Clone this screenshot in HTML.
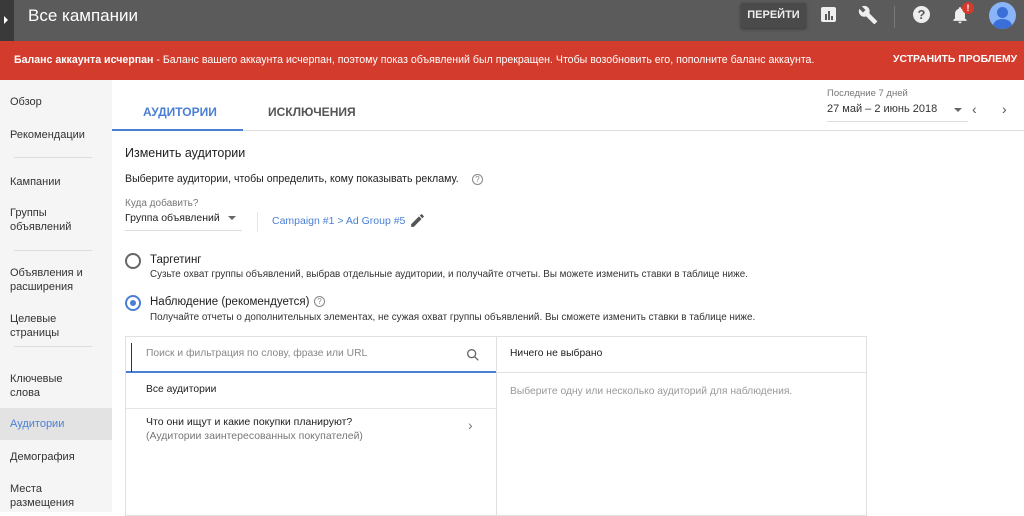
<!DOCTYPE html><html><head><meta charset="utf-8"><style>
*{margin:0;padding:0;box-sizing:border-box}
body{width:1024px;height:512px;overflow:hidden;font-family:"Liberation Sans",sans-serif;background:#fff;position:relative;color:#212121}
.a{position:absolute;white-space:nowrap}
.top{position:absolute;left:0;top:0;width:1024px;height:41px;background:#5b5b5b}
.red{position:absolute;left:0;top:41px;width:1024px;height:39px;background:#d33b2c;color:#fff;font-size:10.6px}
.side{position:absolute;left:0;top:80px;width:112px;height:432px;background:#f5f5f5;font-size:11px;color:#333}
.side .a{left:10px;line-height:14px}
.sep{position:absolute;left:14px;width:78px;height:1px;background:#ddd}
</style></head><body>
<div class="top">
<div class="a" style="left:0;top:0;width:14px;height:41px;background:#3a3a3a"></div>
<div class="a" style="left:4px;top:16px;width:0;height:0;border-left:4px solid #fff;border-top:4px solid transparent;border-bottom:4px solid transparent"></div>
<div class="a" style="left:28px;top:6px;font-size:17px;color:#fff">Все кампании</div>
<div class="a" style="left:741px;top:3px;width:65px;height:25px;background:#4a4a4a;box-shadow:0 1px 3px rgba(0,0,0,.4);color:#eee;font-size:11px;font-weight:bold;text-align:center;line-height:25px">ПЕРЕЙТИ</div>
<div class="a" style="left:821px;top:7px;width:15px;height:15px;background:#eee;border-radius:2px"></div>
<div class="a" style="left:825px;top:14px;width:2px;height:6px;background:#5b5b5b"></div><div class="a" style="left:828px;top:11px;width:2px;height:9px;background:#5b5b5b"></div><div class="a" style="left:831px;top:16px;width:2px;height:4px;background:#5b5b5b"></div>
<svg class="a" style="left:858px;top:5px" width="20" height="20" viewBox="0 0 24 24"><path fill="#eee" d="M22.7 19l-9.1-9.1c.9-2.3.4-5-1.5-6.9-2-2-5-2.4-7.4-1.3L9 6 6 9 1.6 4.7C.4 7.1.9 10.1 2.9 12.1c1.9 1.9 4.6 2.4 6.9 1.5l9.1 9.1c.4.4 1 .4 1.4 0l2.3-2.3c.5-.4.5-1.1.1-1.4z"/></svg>
<div class="a" style="left:894px;top:6px;width:1px;height:22px;background:#777"></div>
<div class="a" style="left:913px;top:6px;width:17px;height:17px;border-radius:50%;background:#eee;color:#5b5b5b;font-size:13px;font-weight:bold;text-align:center;line-height:17px">?</div>
<svg class="a" style="left:950px;top:5px" width="20" height="20" viewBox="0 0 24 24"><path fill="#eee" d="M12 22c1.1 0 2-.9 2-2h-4c0 1.1.9 2 2 2zm6-6v-5c0-3.1-1.600-5.6-4.5-6.3V4c0-.8-.7-1.5-1.5-1.5s-1.5.7-1.5 1.5v.7C7.6 5.4 6 7.9 6 11v5l-2 2v1h16v-1l-2-2z"/></svg>
<div class="a" style="left:962px;top:2px;width:12px;height:12px;border-radius:50%;background:#d33b2c;color:#fff;font-size:9px;font-weight:bold;text-align:center;line-height:12px">!</div>
<div class="a" style="left:989px;top:2px;width:27px;height:27px;border-radius:50%;background:#8ab4f8;overflow:hidden">
<div class="a" style="left:8px;top:5px;width:11px;height:11px;border-radius:50%;background:#3a6fd8"></div>
<div class="a" style="left:4px;top:17px;width:19px;height:14px;border-radius:50%;background:#3a6fd8"></div></div>
</div>
<div class="red">
<div class="a" style="left:14px;top:13px"><b>Баланс аккаунта исчерпан</b> - Баланс вашего аккаунта исчерпан, поэтому показ объявлений был прекращен. Чтобы возобновить его, пополните баланс аккаунта.</div>
<div class="a" style="left:893px;top:13px;font-weight:bold;font-size:10.4px">УСТРАНИТЬ ПРОБЛЕМУ</div>
</div>
<div class="side">
<div class="a" style="top:15px">Обзор</div>
<div class="a" style="top:48px">Рекомендации</div>
<div class="sep" style="top:77px"></div>
<div class="a" style="top:95px">Кампании</div>
<div class="a" style="top:126px">Группы<br>объявлений</div>
<div class="sep" style="top:170px"></div>
<div class="a" style="top:186px">Объявления и<br>расширения</div>
<div class="a" style="top:232px">Целевые<br>страницы</div>
<div class="sep" style="top:266px"></div>
<div class="a" style="top:292px">Ключевые<br>слова</div>
<div style="position:absolute;left:0;top:328px;width:112px;height:32px;background:#e3e3e3"></div>
<div class="a" style="top:337px;color:#4a7fd6">Аудитории</div>
<div class="a" style="top:370px">Демография</div>
<div class="a" style="top:402px">Места<br>размещения</div>
</div>
<div class="a" style="left:112px;top:130px;width:912px;height:1px;background:#ddd"></div>
<div class="a" style="left:112px;top:129px;width:131px;height:2px;background:#4a7fd6"></div>
<div class="a" style="left:143px;top:105px;font-size:12px;font-weight:bold;color:#4a7fd6">АУДИТОРИИ</div>
<div class="a" style="left:268px;top:105px;font-size:12px;font-weight:bold;color:#555">ИСКЛЮЧЕНИЯ</div>
<div class="a" style="left:827px;top:88px;font-size:9.5px;color:#777">Последние 7 дней</div>
<div class="a" style="left:827px;top:103px;font-size:11px;color:#333">27 май – 2 июнь 2018</div>
<div class="a" style="left:827px;top:121px;width:141px;height:1px;background:#ddd"></div>
<div class="a" style="left:954px;top:108px;border-top:4px solid #666;border-left:4px solid transparent;border-right:4px solid transparent"></div>
<div class="a" style="left:972px;top:101px;font-size:14px;color:#555">‹</div>
<div class="a" style="left:1002px;top:101px;font-size:14px;color:#555">›</div>
<div class="a" style="left:125px;top:146px;font-size:12.5px">Изменить аудитории</div>
<div class="a" style="left:125px;top:173px;font-size:10.6px">Выберите аудитории, чтобы определить, кому показывать рекламу.</div>
<div class="a" style="left:472px;top:174px;width:11px;height:11px;border:1px solid #888;border-radius:50%;font-size:8px;color:#888;text-align:center;line-height:9px">?</div>
<div class="a" style="left:125px;top:198px;font-size:10px;color:#777">Куда добавить?</div>
<div class="a" style="left:125px;top:212px;font-size:10.5px">Группа объявлений</div>
<div class="a" style="left:228px;top:216px;border-top:4px solid #666;border-left:4px solid transparent;border-right:4px solid transparent"></div>
<div class="a" style="left:125px;top:230px;width:117px;height:1px;background:#ddd"></div>
<div class="a" style="left:257px;top:212px;width:1px;height:20px;background:#e5e5e5"></div>
<div class="a" style="left:272px;top:215px;font-size:10.5px;color:#4a7fd6">Campaign #1 &gt; Ad Group #5</div>
<svg class="a" style="left:409px;top:212px" width="17" height="17" viewBox="0 0 24 24"><path fill="#555" d="M3 17.25V21h3.75L17.8 9.9l-3.7-3.7L3 17.25zM20.7 7c.4-.4.4-1 0-1.4l-2.3-2.3c-.4-.4-1-.4-1.4 0l-1.8 1.8 3.7 3.7L20.7 7z"/></svg>
<div class="a" style="left:125px;top:253px;width:16px;height:16px;border:2px solid #666;border-radius:50%"></div>
<div class="a" style="left:150px;top:254px;font-size:11.5px">Таргетинг</div>
<div class="a" style="left:150px;top:269px;font-size:9.85px;color:#333">Сузьте охват группы объявлений, выбрав отдельные аудитории, и получайте отчеты. Вы можете изменить ставки в таблице ниже.</div>
<div class="a" style="left:125px;top:295px;width:16px;height:16px;border:2px solid #4a7fd6;border-radius:50%"><div class="a" style="left:3px;top:3px;width:6px;height:6px;border-radius:50%;background:#4a7fd6"></div></div>
<div class="a" style="left:150px;top:296px;font-size:11.5px">Наблюдение (рекомендуется)</div>
<div class="a" style="left:314px;top:296px;width:11px;height:11px;border:1px solid #888;border-radius:50%;font-size:8px;color:#888;text-align:center;line-height:9px">?</div>
<div class="a" style="left:150px;top:312px;font-size:9.9px;color:#333">Получайте отчеты о дополнительных элементах, не сужая охват группы объявлений. Вы сможете изменить ставки в таблице ниже.</div>
<div class="a" style="left:125px;top:336px;width:742px;height:180px;border:1px solid #e0e0e0"></div>
<div class="a" style="left:496px;top:336px;width:1px;height:180px;background:#e0e0e0"></div>
<div class="a" style="left:126px;top:371px;width:370px;height:2px;background:#4a7fd6"></div>
<div class="a" style="left:497px;top:372px;width:370px;height:1px;background:#e0e0e0"></div>
<div class="a" style="left:126px;top:408px;width:370px;height:1px;background:#e5e5e5"></div>
<div class="a" style="left:131px;top:343px;width:1px;height:29px;background:#333"></div>
<div class="a" style="left:146px;top:348px;font-size:10.3px;color:#888">Поиск и фильтрация по слову, фразе или URL</div>
<svg class="a" style="left:465px;top:347px" width="16" height="16" viewBox="0 0 24 24"><circle cx="10" cy="10" r="6" fill="none" stroke="#666" stroke-width="2"/><path d="M14.5 14.5L20 20" stroke="#666" stroke-width="2"/></svg>
<div class="a" style="left:510px;top:348px;font-size:10.3px">Ничего не выбрано</div>
<div class="a" style="left:146px;top:384px;font-size:10.3px">Все аудитории</div>
<div class="a" style="left:510px;top:386px;font-size:10.3px;color:#999">Выберите одну или несколько аудиторий для наблюдения.</div>
<div class="a" style="left:146px;top:416px;font-size:10.5px">Что они ищут и какие покупки планируют?</div>
<div class="a" style="left:146px;top:430px;font-size:10.5px;color:#777">(Аудитории заинтересованных покупателей)</div>
<div class="a" style="left:468px;top:417px;font-size:14px;color:#777">›</div>
</body></html>
